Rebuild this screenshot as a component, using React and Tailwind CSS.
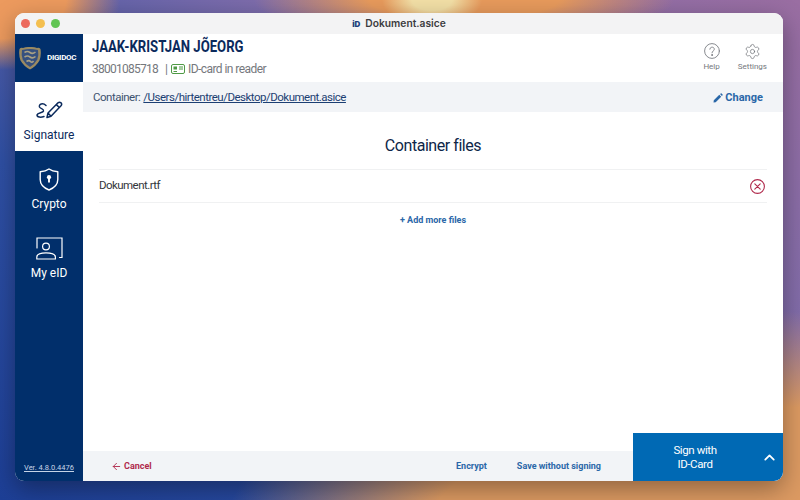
import React from "react";
import { ArrowLeft, ChevronUp, Settings } from "lucide-react";

function Coat() {
  return (
    <svg width="22" height="24" viewBox="0 0 22 24" className="shrink-0">
      <path d="M0.5 3 Q2 1 4 2 Q7 0.5 11 1 Q15 0.5 18 2 Q20 1 21.5 3 Q22.5 9 20.5 14.5 Q17 20.5 11 23.5 Q5 20.5 1.5 14.5 Q-0.5 9 0.5 3Z" fill="#9a8a62" />
      <path d="M3 4 Q8 3 11 3 Q14 3 19 4 Q20 9 18.3 13.5 Q15.5 18.5 11 21 Q6.5 18.5 3.7 13.5 Q2 9 3 4Z" fill="#35507f" />
      <path d="M5.5 6.5 Q8.5 4.6 11 6.5 T16.5 6 M5.5 11 Q8.5 9.1 11 11 T16.5 10.5 M7.5 15.5 Q10 13.8 11.5 15.5 T14.5 15" stroke="#a9a185" strokeWidth="1.6" fill="none" />
    </svg>
  );
}

function NavItem({ label, active, children }) {
  return (
    <div className={active ? "h-[69px] flex flex-col items-center pt-[14px] bg-white text-[#0b2a5c]" : "h-[69px] flex flex-col items-center pt-[14px] text-white"}>
      <div className="h-[28px] flex items-center justify-center">{children}</div>
      <div className="mt-[3px] text-[12px] leading-[16px]">{label}</div>
    </div>
  );
}

export default function App() {
  return (
    <div className="w-[800px] h-[500px] overflow-hidden pt-[13px] pl-[15px] font-['Roboto',sans-serif] bg-[radial-gradient(ellipse_50px_26px_at_54%_0%,#f2dfa6_40%,transparent_100%),radial-gradient(ellipse_210px_40px_at_58%_0%,#e79a5c_45%,transparent_100%),radial-gradient(ellipse_120px_70px_at_0%_0%,#ec9a5e_55%,transparent_100%),radial-gradient(ellipse_520px_250px_at_92%_112%,#dc9a62_62%,transparent_100%),linear-gradient(215deg,#9a6ea2_0%,#7d6cab_36%,#2f50a4_68%,#1d3f96_100%)]">
      <div className="relative w-[768px] h-[468px]">
        <div className="w-full h-full rounded-[9px] overflow-hidden flex flex-col shadow-[0_8px_24px_rgba(0,0,0,0.35)] bg-white">
          {/* title bar */}
          <div className="h-[21px] shrink-0 bg-[#f3f3f4] grid grid-cols-[1fr_auto_1fr] items-center">
            <div className="flex gap-[6px] pl-[6px]">
              <div className="w-[9px] h-[9px] rounded-full bg-[#ec6a5e]" />
              <div className="w-[9px] h-[9px] rounded-full bg-[#f4bf4f]" />
              <div className="w-[9px] h-[9px] rounded-full bg-[#61c554]" />
            </div>
            <div className="flex items-center gap-[5px] text-[10.25px] font-semibold text-[#3c3c40] font-['Inter',sans-serif]">
              <span className="text-[8px] font-black text-[#1c3f7c] leading-none">iD</span>
              Dokument.asice
            </div>
          </div>

          <div className="flex-1 flex min-h-0">
            {/* sidebar */}
            <div className="w-[68px] shrink-0 bg-[#012f6b] flex flex-col">
              <div className="h-[48px] flex items-center pl-[4px] gap-[6px]">
                <Coat />
                <span className="text-[8px] font-bold text-white tracking-[-0.3px]">DIGIDOC</span>
              </div>
              <NavItem label="Signature" active>
                <svg width="27" height="18" viewBox="0 0 27 18" fill="none" stroke="#0b2a5c" strokeWidth="1.5" strokeLinecap="round" strokeLinejoin="round">
                  <path d="M10 4.5 C7 1.5 2.5 3 3.5 6 C4.5 8 8 7.5 7.5 10 C7 12 1.5 11.5 1 14 C1 16.5 5 16.5 8 15.5" />
                  <path d="M11 16.5 L12 12 L22 1.8 Q23.5 0.7 25 1.8 Q26.3 3.3 25 4.8 L15 15.2 Z M20.3 3.6 L23.4 6.5 M12 12 L15 15.2" />
                </svg>
              </NavItem>
              <NavItem label="Crypto">
                <svg width="20" height="23" viewBox="0 0 20 23" fill="none" stroke="#fff" strokeWidth="1.4" strokeLinejoin="round">
                  <path d="M10 1 C12.5 2.8 15.5 3.5 18.8 3.8 V11.5 C18.8 16.5 15 20 10 22 C5 20 1.2 16.5 1.2 11.5 V3.8 C4.5 3.5 7.5 2.8 10 1Z" />
                  <circle cx="10" cy="9.2" r="2.1" fill="#fff" stroke="none" />
                  <path d="M10 10 V14.5" strokeWidth="1.9" />
                </svg>
              </NavItem>
              <NavItem label="My eID">
                <svg width="27" height="23" viewBox="0 0 27 23" fill="none" stroke="#fff" strokeWidth="1.2" strokeLinecap="round">
                  <path d="M1 11 V1 H26 V20.5 H23.5" />
                  <circle cx="10" cy="9.5" r="3.4" />
                  <path d="M0.8 22 V20 C0.8 17 5 15.8 10 15.8 C15 15.8 19.4 17 19.4 20 V22 Z" />
                </svg>
              </NavItem>
              <div className="mt-auto pb-[7px] text-center text-[7.5px] leading-[12px] text-[#c5d3e6] underline">Ver. 4.8.0.4476</div>
            </div>

            {/* main */}
            <div className="flex-1 flex flex-col min-w-0">
              <div className="h-[48px] shrink-0 flex justify-between pl-[9px] pr-[16px]">
                <div className="pt-[3px]">
                  <div className="text-[16px] leading-[20px] font-bold text-[#0b2a5c] origin-left scale-x-[0.82] whitespace-nowrap">JAAK-KRISTJAN JÕEORG</div>
                  <div className="mt-[4px] flex items-center text-[12px] leading-[16px] text-[#75787d] whitespace-nowrap">
                    <span className="w-[65px] tracking-[-0.75px]">38001085718</span>
                    <span className="ml-[8px]">|</span>
                    <svg className="ml-[3px]" width="14" height="10" viewBox="0 0 14 10" fill="none" stroke="#4f9a45" strokeWidth="1">
                      <rect x="0.5" y="0.5" width="13" height="9" rx="1.5" />
                      <rect x="2.5" y="2.5" width="3.5" height="3" fill="#4f9a45" stroke="none" />
                      <path d="M2.5 7.5 H6 M8 3 H12 M8 5 H12" />
                    </svg>
                    <span className="ml-[3px] tracking-[-0.55px]">ID-card in reader</span>
                  </div>
                </div>
                <div className="flex gap-[18px] pt-[9px] text-[8px] text-[#75787d]">
                  <div className="flex flex-col items-center">
                    <svg width="16" height="16" viewBox="0 0 16 16" fill="none" stroke="#7b7e83" strokeWidth="0.9" strokeLinecap="round">
                      <circle cx="8" cy="8" r="7.4" />
                      <path d="M5.8 6.2 C5.8 3.4 10.3 3.5 10.3 6.2 C10.3 7.9 8 8 8 9.8" />
                      <circle cx="8" cy="12" r="0.5" fill="#7b7e83" />
                    </svg>
                    <span className="mt-[2px] leading-[11px]">Help</span>
                  </div>
                  <div className="flex flex-col items-center">
                    <Settings size={17} strokeWidth={1} className="text-[#6f7277]" />
                    <span className="mt-[1px] leading-[11px]">Settings</span>
                  </div>
                </div>
              </div>

              <div className="h-[30px] shrink-0 bg-[#f2f4f7] flex items-center justify-between pt-[1px] pl-[10px] pr-[20px] text-[11.5px] text-[#3d526f]">
                <div className="flex gap-[3px] tracking-[-0.5px]">
                  <span>Container:</span>
                  <span className="underline text-[#1c3f73]">/Users/hirtentreu/Desktop/Dokument.asice</span>
                </div>
                <div className="flex items-center gap-[2px] font-bold text-[#2a67a8] mt-[1px]">
                  <svg width="10" height="10" viewBox="0 0 10 10" fill="#2a67a8">
                    <path d="M0.5 9.5 L0.8 7.3 L6.3 1.8 L8.2 3.7 L2.7 9.2 Z M7 1.1 L7.8 0.4 Q8.2 0.1 8.6 0.4 L9.6 1.4 Q9.9 1.8 9.6 2.2 L8.9 3 Z" />
                  </svg>
                  <span className="text-[11px]">Change</span>
                </div>
              </div>

              <div className="flex-1 flex flex-col px-[16px] min-h-0">
                <h1 className="mt-[24px] text-center text-[16px] leading-[20px] tracking-[-0.45px] text-[#0e2648]">Container files</h1>
                <div className="mt-[13px] h-[34px] border-y border-[#f0f1f2] flex items-center justify-between">
                  <span className="text-[11.5px] tracking-[-0.55px] text-[#33363b]">Dokument.rtf</span>
                  <svg className="mr-[2px]" width="15" height="15" viewBox="0 0 15 15" fill="none" stroke="#b02a4c" strokeWidth="1.1" strokeLinecap="round">
                    <circle cx="7.5" cy="7.5" r="6.9" />
                    <path d="M4.8 4.8 L10.2 10.2 M10.2 4.8 L4.8 10.2" />
                  </svg>
                </div>
                <div className="mt-[11px] text-center text-[9px] leading-[12px] font-bold text-[#2a67a8]">+ Add more files</div>
              </div>

              <div className="h-[30px] shrink-0 bg-[#f2f4f7] flex items-center pt-[1px] text-[9px] font-bold pr-[182px]">
                <div className="ml-[28px] flex items-center gap-[2px] text-[#b02a4c]">
                  <ArrowLeft size={11} strokeWidth={2} />
                  <span>Cancel</span>
                </div>
                <div className="ml-auto flex gap-[30px] text-[#2a67a8]">
                  <span>Encrypt</span>
                  <span>Save without signing</span>
                </div>
              </div>
            </div>
          </div>
        </div>

        {/* sign button sticks out over the footer */}
        <div className="absolute right-0 bottom-0 w-[150px] h-[48px] bg-[#0069b4] rounded-br-[9px] flex items-center text-white">
          <div className="w-[124px] text-center text-[11.5px] leading-[14px] tracking-[-0.4px]">
            Sign with
            <br />
            ID-Card
          </div>
          <ChevronUp size={17} strokeWidth={2.5} className="ml-[4px]" />
        </div>
      </div>
    </div>
  );
}
